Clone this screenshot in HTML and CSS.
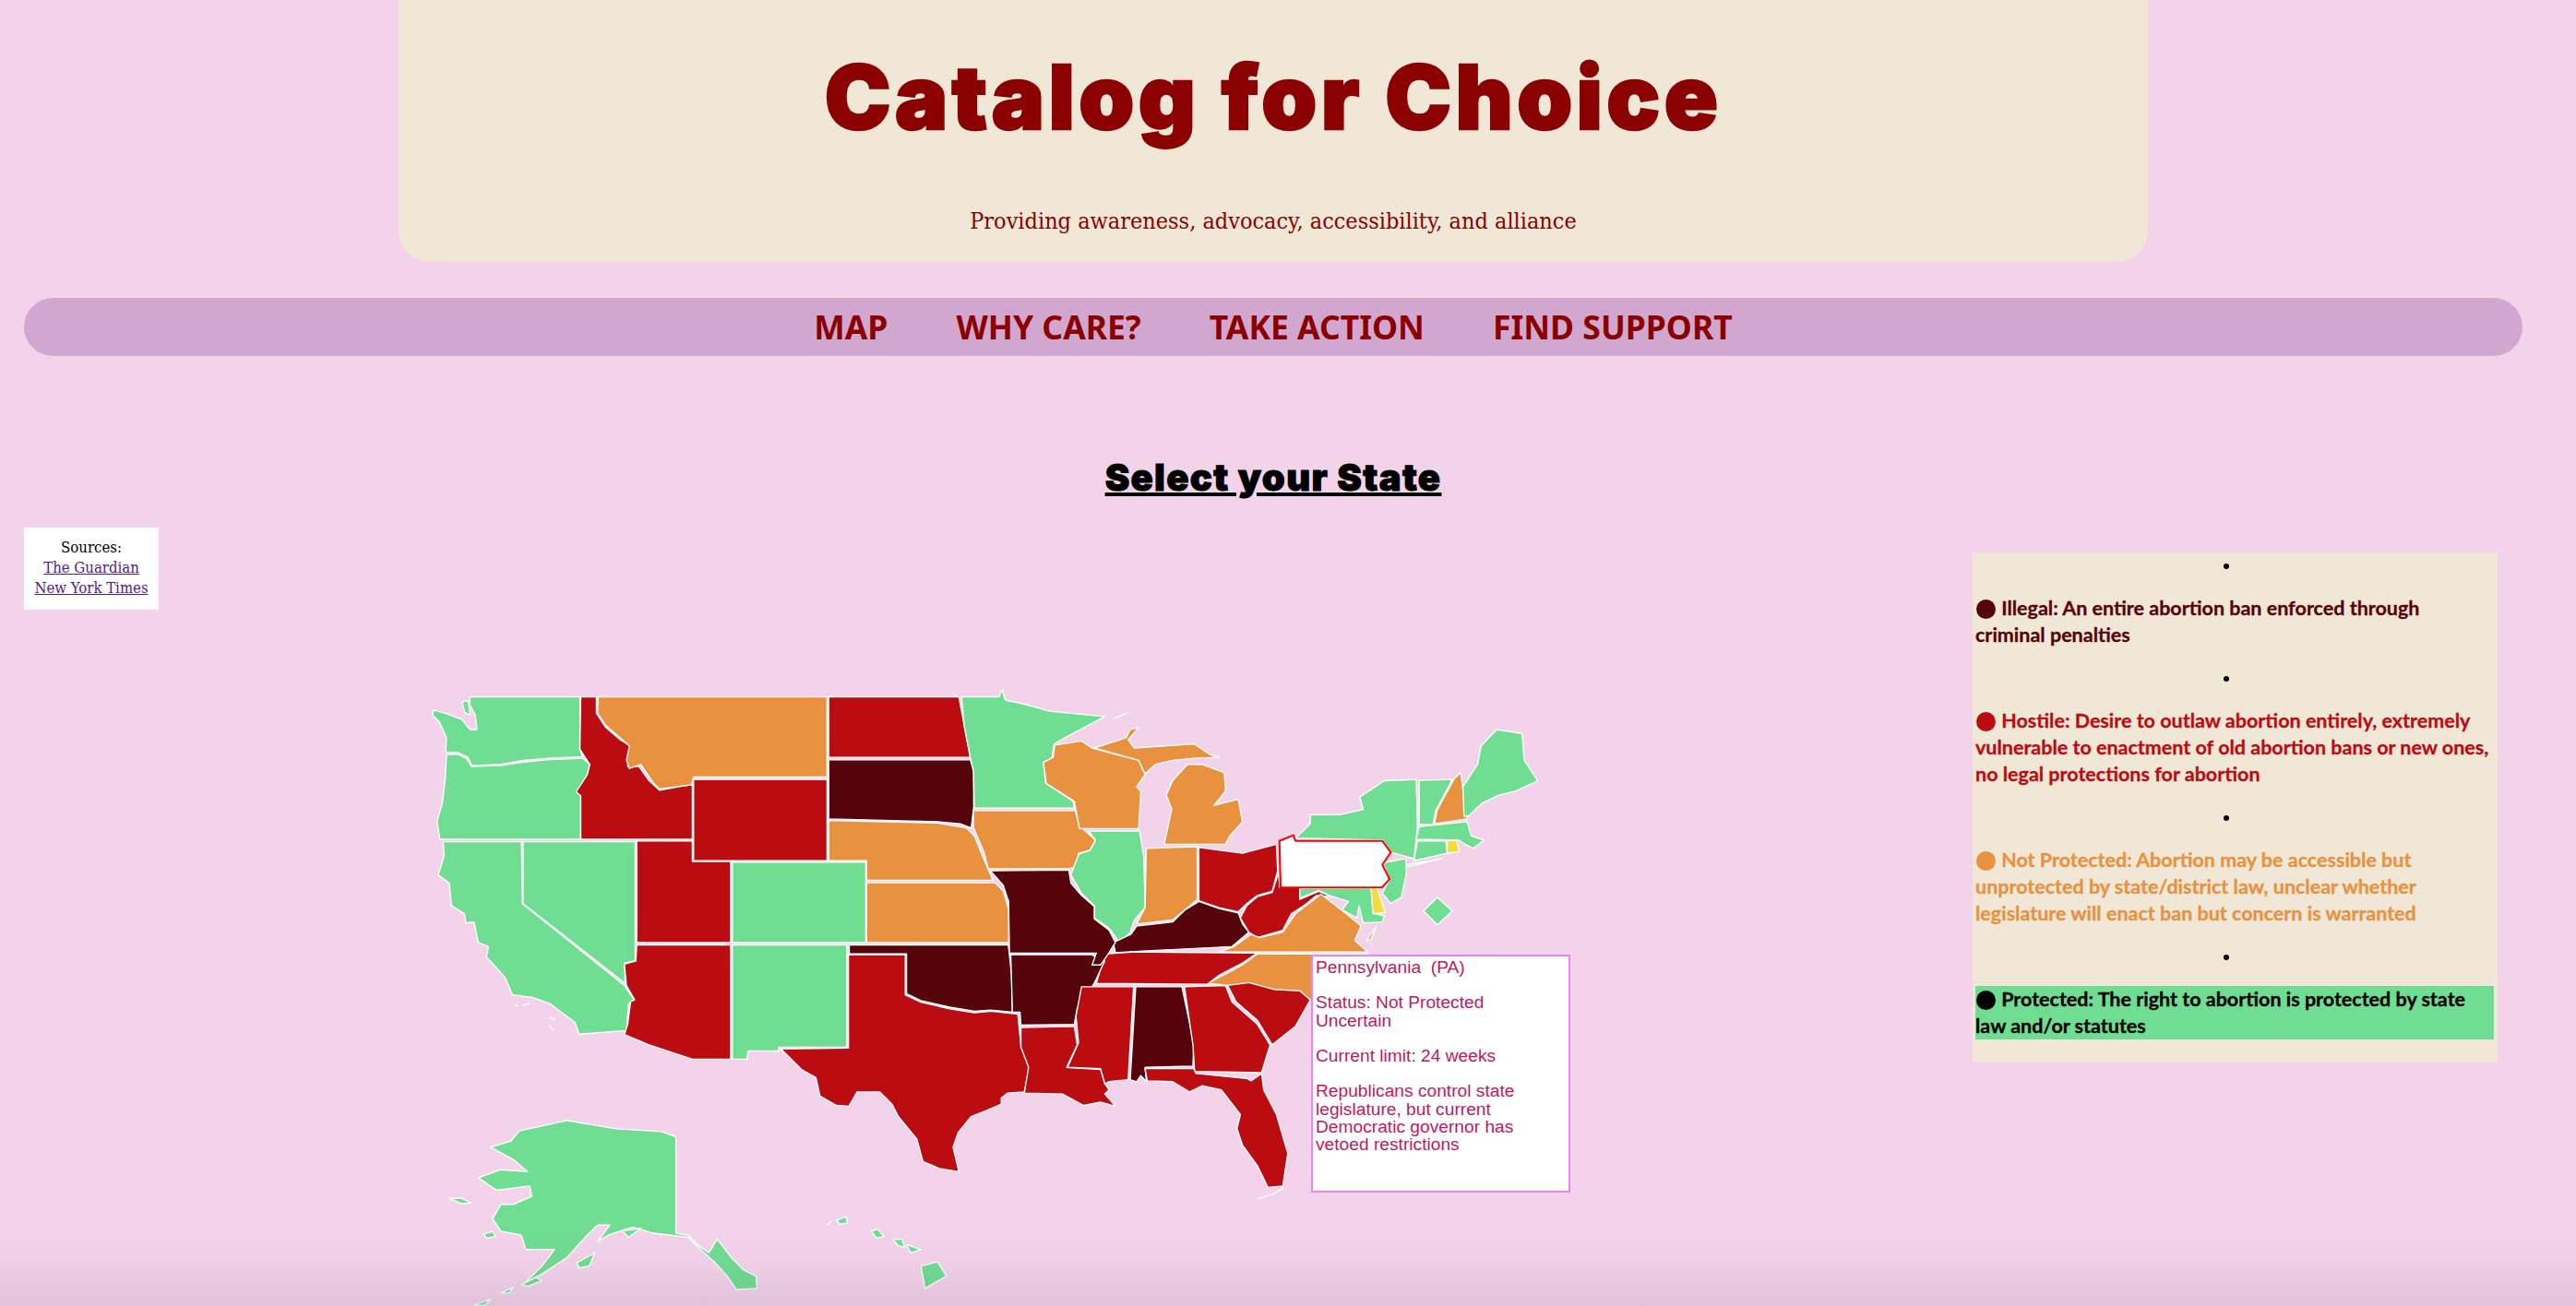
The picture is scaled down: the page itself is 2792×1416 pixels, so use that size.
FILE: index.html
```html
<!DOCTYPE html>
<html lang="en">
<head>
<meta charset="utf-8">
<title>Catalog for Choice</title>
<link rel="stylesheet" href="styles.css">
</head>
<body>
<div class="page">
  <header class="masthead">
    <h1 class="title">Catalog for Choice</h1>
    <p class="tagline">Providing awareness, advocacy, accessibility, and alliance</p>
  </header>
  <nav class="nav">
    <a class="nav-link" href="#">MAP</a>
    <a class="nav-link" href="#">WHY CARE?</a>
    <a class="nav-link" href="#">TAKE ACTION</a>
    <a class="nav-link" href="#">FIND SUPPORT</a>
  </nav>
  <h2 class="section-title">Select your State</h2>
  <main class="content">
    <aside class="sources">
      Sources:<br>
      <a href="#">The Guardian</a><br>
      <a href="#">New York Times</a>
    </aside>
    <section class="map">
      <svg class="map-svg" viewBox="400 720 1320 696" width="1320" height="696" role="img" aria-label="United States abortion status map">
        <g transform="translate(400 720) scale(.4464 .4439)">
          <path class="ok" d="M245 80L512 80L512 208L518 226L432 230L370 236L320 245L250 248L240 228L215 216L186 216L188 180L170 140L154 125L156 112L190 122L225 135L245 160L262 160L258 125L245 100Z"/>
          <path class="ok" d="M226 92L240 90L246 125L232 118Z"/>
          <path class="ok" d="M188 222L215 220L238 232L248 250L320 248L370 240L430 234L518 230L536 245L530 270L505 310L514 322L514 428L172 428L165 385L178 340L185 280Z"/>
          <path class="hostile" d="M514 80L552 80L552 120L575 155L610 185L634 200L628 250L655 250L680 285L705 308L760 298L785 295L785 428L514 428L514 322L503 312L530 270L536 245L512 208Z"/>
          <path class="unprotected" d="M556 80L1112 80L1112 276L788 276L783 295L705 305L690 290L660 245L632 255L625 235L632 200L610 180L575 150L555 120Z"/>
          <path class="hostile" d="M1116 80L1432 80L1445 150L1460 228L1116 228Z"/>
          <path class="illegal" d="M1116 234L1460 234L1468 262L1468 350L1462 400L1435 390L1380 385L1116 378Z"/>
          <path class="hostile" d="M788 282L1112 282L1112 480L788 480Z"/>
          <path class="unprotected" d="M1116 382L1380 388L1450 400L1470 420L1490 470L1515 528L1208 528L1208 480L1116 480Z"/>
          <path class="unprotected" d="M1208 534L1520 534L1540 555L1553 600L1553 680L1208 680Z"/>
          <path class="ok" d="M882 484L1206 484L1206 680L882 680Z"/>
          <path class="hostile" d="M650 432L785 432L785 482L878 482L878 680L650 680Z"/>
          <path class="ok" d="M374 434L646 434L646 725L620 730L622 780L374 585Z"/>
          <path class="ok" d="M180 434L370 434L372 585L620 785L645 822L630 830L625 895L510 904L500 875L440 830L400 815L348 808L330 765L285 715L290 690L265 680L255 630L235 632L232 610L200 590L195 535L168 515L182 470Z"/>
          <path class="hostile" d="M620 733L648 725L650 686L878 686L878 965L785 965L680 930L620 905L628 880L635 825L645 820L625 785Z"/>
          <path class="ok" d="M882 686L1160 686L1160 936L995 936L995 945L920 945L918 965L882 965Z"/>
          <path class="hostile" d="M1164 710L1302 710L1302 808L1340 826L1410 842L1470 852L1510 848L1575 855L1583 935L1603 985L1591 1045L1550 1048L1535 1060L1535 1075L1500 1090L1462 1105L1430 1145L1418 1180L1432 1240L1385 1232L1345 1215L1330 1160L1285 1105L1270 1075L1240 1045L1185 1045L1165 1080L1135 1078L1095 1055L1085 1010L1050 990L1000 940L1164 938Z"/>
          <path class="illegal" d="M1166 686L1552 686L1560 760L1562 850L1510 845L1470 848L1410 838L1340 822L1305 805L1305 708L1166 708Z"/>
          <path class="ok" d="M295 1180L345 1165L365 1140L480 1115L600 1135L710 1142L745 1155L745 1390L775 1395L800 1420L825 1438L845 1405L880 1450L910 1480L940 1495L942 1525L892 1528L870 1495L840 1462L800 1425L775 1400L690 1390L640 1375L580 1395L555 1410L585 1370L555 1370L525 1400L480 1450L420 1490L380 1510L420 1470L450 1430L380 1430L370 1395L320 1385L300 1355L320 1320L350 1320L395 1300L390 1275L310 1285L265 1255L320 1235L385 1240L350 1210Z"/>
          <path class="ok" d="M195 1305L225 1305L248 1316L225 1318Z"/>
          <path class="ok" d="M278 1392L300 1386L308 1398L285 1402Z"/>
          <path class="ok" d="M505 1462L548 1438L535 1470L510 1475Z"/>
          <path class="ok" d="M370 1516L405 1498L420 1506L385 1520Z"/>
          <path class="ok" d="M320 1536L350 1522L340 1536Z"/>
          <path class="ok" d="M255 1566L298 1550L280 1566Z"/>
          <path class="ok" d="M615 1385L660 1378L630 1400Z"/>
          <path class="ok" d="M1340 1470L1380 1460L1402 1495L1350 1525Z"/>
          <path class="ok" d="M1305 1418L1340 1430L1315 1438Z"/>
          <path class="ok" d="M1220 1385L1235 1380L1250 1398L1232 1402Z"/>
          <path class="ok" d="M1135 1358L1158 1350L1162 1365L1142 1368Z"/>
          <path class="ok" d="M1272 1405L1295 1405L1300 1425L1285 1420Z"/>
          <path class="coastline" d="M352 832L362 836M372 834L390 828M438 862L452 870M438 882L446 894M1112 1370L1124 1360"/>
        </g>
        <g transform="translate(1000 720) scale(.4592 .4439)">
          <path class="ok" d="M92 80L180 80L188 62L195 88L240 98L300 115L430 128L345 175L310 195L305 230L285 240L290 290L355 335L358 352L122 352L120 262L112 225L98 150Z"/>
          <path class="coastline" d="M450 134L486 118"/>
          <path class="unprotected" d="M120 358L360 358L370 395L408 430L395 455L368 462L365 495L345 500L155 500L145 460L120 400Z"/>
          <path class="unprotected" d="M312 198L375 188L400 205L510 235L525 270L505 300L515 310L510 402L370 402L358 335L292 292L285 240L308 228Z"/>
          <path class="unprotected" d="M405 205L480 180L490 160L510 155L485 185L500 205L570 200L640 195L680 222L700 228L640 230L590 235L550 245L525 268L510 235Z"/>
          <path class="unprotected" d="M570 440L588 355L575 320L590 285L625 245L660 245L712 265L715 310L688 345L745 330L755 385L725 420L715 440Z"/>
          <path class="ok" d="M392 408L512 408L522 470L525 595L500 625L490 655L465 680L440 645L405 620L405 590L375 560L350 515L368 465L395 455L408 430Z"/>
          <path class="unprotected" d="M528 450L648 446L648 575L620 600L590 625L505 635L525 595Z"/>
          <path class="hostile" d="M652 448L755 462L835 440L838 505L825 555L790 565L765 585L745 605L700 595L652 578Z"/>
          <path class="illegal" d="M450 680L492 660L505 640L590 630L620 600L652 580L700 597L745 608L755 635L770 655L730 690L500 702L455 705Z"/>
          <path class="hostile" d="M840 510L843 546L890 546L890 575L935 555L965 568L930 565L900 590L870 610L850 650L790 668L770 655L750 620L765 590L790 568L825 558Z"/>
          <path class="unprotected" d="M700 703L735 690L775 660L795 668L850 655L880 610L905 590L940 562L1000 610L1035 640L1020 675L1050 703Z"/>
          <path class="unprotected" d="M1048 675L1072 638L1058 672Z"/>
          <path class="unprotected" d="M672 780L700 765L755 735L790 708L1050 708L1040 780L917 825L830 795L770 780L720 785Z"/>
          <path class="hostile" d="M410 780L430 708L500 703L790 706L755 730L700 760L672 782Z"/>
          <path class="illegal" d="M208 710L400 710L420 725L430 725L405 780L365 840L358 880L232 882L230 850L212 850Z"/>
          <path class="illegal" d="M160 505L345 503L350 535L375 565L405 592L405 622L440 650L455 680L440 705L420 735L400 735L410 706L205 706L203 580L190 540Z"/>
          <path class="hostile" d="M232 888L358 885L365 930L340 985L420 990L430 1025L440 1040L430 1050L455 1080L420 1070L380 1078L330 1050L240 1048L250 985L232 935Z"/>
          <path class="hostile" d="M375 788L498 788L485 1015L440 1020L430 1025L420 988L342 985L368 925L362 860Z"/>
          <path class="illegal" d="M503 788L612 788L640 925L638 982L525 985L528 1020L515 1005L505 1020L490 1015Z"/>
          <path class="hostile" d="M618 788L715 785L730 825L790 880L820 930L800 998L642 995L638 930Z"/>
          <path class="hostile" d="M720 785L770 778L830 795L890 798L915 820L880 885L825 930L790 870L740 825Z"/>
          <path class="hostile" d="M525 988L640 988L645 1000L765 1012L775 1018L800 1000L805 1040L835 1100L862 1195L850 1275L815 1278L790 1225L755 1175L742 1135L750 1100L705 1040L660 1030L630 1045L590 1020L530 1018Z"/>
          <path class="coastline" d="M792 1306L830 1294L852 1278"/>
          <path class="ok" d="M880 425L1085 430L1105 460L1160 475L1168 395L1165 282L1090 285L1032 325L1040 355L985 368L915 368L915 390Z"/>
          <path class="ok" d="M1145 495L1225 475L1145 490Z"/>
          <path class="ok" d="M1172 284L1250 282L1210 360L1205 392L1172 392Z"/>
          <path class="unprotected" d="M1255 280L1270 265L1285 378L1208 390L1215 355Z"/>
          <path class="ok" d="M1278 372L1275 300L1310 245L1318 200L1355 160L1415 170L1420 235L1452 285L1400 310L1360 320L1320 340L1290 370Z"/>
          <path class="ok" d="M1172 397L1285 385L1295 420L1325 430L1300 450L1280 440L1265 430L1165 428Z"/>
          <path class="ok" d="M1168 432L1235 432L1238 462L1160 480Z"/>
          <path class="permissive" d="M1238 432L1260 430L1267 458L1238 462Z"/>
          <path class="ok" d="M1090 485L1140 475L1142 510L1130 570L1105 585L1085 560L1102 525L1088 490Z"/>
          <path class="ok" d="M890 548L1060 546L1070 610L1090 615L1085 630L1040 632L1030 590L1025 620L990 600L1005 580L960 565L935 553L890 572Z"/>
          <path class="permissive" d="M1058 545L1072 545L1092 607L1063 610Z"/>
          <path class="ok" d="M1215 570L1250 603L1215 637L1182 603Z"/>
          <path class="selected" d="M842 432L875 418L880 432L1085 432L1105 460L1085 490L1102 525L1085 545L845 546Z"/>
        </g>
      </svg>
      <div class="tooltip">
        <p class="tooltip-block">Pennsylvania &nbsp;(PA)</p>
        <p class="tooltip-block">Status: Not Protected<br>Uncertain</p>
        <p class="tooltip-block">Current limit: 24 weeks</p>
        <p class="tooltip-block">Republicans control state legislature, but current Democratic governor has vetoed restrictions</p>
      </div>
    </section>
    <aside class="legend">
      <span class="bullet"></span>
      <p class="legend-text text-illegal"><span class="swatch swatch-illegal"></span> Illegal: An entire abortion ban enforced through criminal penalties</p>
      <span class="bullet"></span>
      <p class="legend-text text-hostile"><span class="swatch swatch-hostile"></span> Hostile: Desire to outlaw abortion entirely, extremely vulnerable to enactment of old abortion bans or new ones, no legal protections for abortion</p>
      <span class="bullet"></span>
      <p class="legend-text text-unprotected"><span class="swatch swatch-unprotected"></span> Not Protected: Abortion may be accessible but unprotected by state/district law, unclear whether legislature will enact ban but concern is warranted</p>
      <span class="bullet"></span>
      <p class="legend-text text-protected"><span class="swatch swatch-protected"></span> Protected: The right to abortion is protected by state law and/or statutes</p>
    </aside>
  </main>
  <div class="bottom-shade"></div>
</div>
</body>
</html>
```
FILE: styles.css
```css
* { box-sizing: border-box; }
html, body { margin: 0; padding: 0; }
body { background: #f3d3ea; overflow: hidden; }
.page { position: relative; width: 2792px; height: 1416px; overflow: hidden; }

.masthead {
  width: 1896px;
  height: 284px;
  margin-left: 432px;
  background: #f1e7d7;
  border-radius: 0 0 34px 34px;
  display: flex;
  flex-direction: column;
  align-items: center;
}
.title {
  margin: 50px 0 0;
  font-family: Inter, "Liberation Sans", sans-serif;
  font-weight: 900;
  font-size: 96px;
  line-height: 110px;
  letter-spacing: 4.4px;
  -webkit-text-stroke: 2.5px #8b0000;
  color: #8b0000;
  white-space: nowrap;
}
.tagline {
  margin: 65px 0 0;
  font-family: "DejaVu Serif Condensed", "DejaVu Serif", serif;
  font-size: 25px;
  line-height: 30px;
  color: #8b0000;
}

.nav {
  width: 2708px;
  height: 63px;
  margin: 39px 0 0 26px;
  background: #d1a7cf;
  border-radius: 32px;
  display: flex;
  justify-content: center;
  align-items: center;
  gap: 74px;
}
.nav-link {
  margin-top: -2px;
  font-family: "Noto Sans", "Open Sans", sans-serif;
  font-weight: 700;
  font-size: 35.5px;
  line-height: 48px;
  color: #8b0000;
  text-decoration: none;
}

.section-title {
  width: 2760px;
  margin: 108px 0 0;
  font-family: Inter, "Liberation Sans", sans-serif;
  font-weight: 900;
  font-size: 40px;
  line-height: 48px;
  letter-spacing: 1.3px;
  -webkit-text-stroke: 1px #000;
  text-align: center;
  text-decoration: underline;
  color: #000;
}

.content {
  display: flex;
  align-items: flex-start;
  margin-top: 30px;
  padding-left: 26px;
}
.sources {
  flex: none;
  width: 146px;
  height: 89px;
  padding: 11px 0;
  background: #fff;
  font-family: "DejaVu Serif Condensed", "DejaVu Serif", serif;
  font-size: 16.6px;
  line-height: 22px;
  text-align: center;
  color: #000;
}
.sources a { color: #551a8b; }

.map {
  flex: none;
  position: relative;
  width: 1320px;
  height: 696px;
  margin: 148px 0 0 228px;
}
.map-svg { display: block; }
.map-svg path { stroke: #fff; stroke-width: 3; stroke-linejoin: round; }
.ok { fill: #6fdd92; }
.unprotected { fill: #e8923f; }
.hostile { fill: #bb0c11; }
.illegal { fill: #56040b; }
.permissive { fill: #f5dc3e; }
.coastline { fill: none; }
.map-svg .selected { fill: #fff; stroke: #f00; stroke-width: 4.5; }

.tooltip {
  position: absolute;
  left: 1021px;
  top: 315px;
  width: 281px;
  height: 258px;
  padding: 2px 2px 0 3px;
  background: #fff;
  border: 2px solid #ee82ee;
  font-family: "Liberation Sans", Arial, sans-serif;
  font-size: 19.2px;
  line-height: 19.2px;
  color: #c2185b;
}
.tooltip-block { margin: 0 0 19.2px; }

.legend {
  flex: none;
  width: 569px;
  height: 553px;
  margin: 27px 0 0 418px;
  padding: 0 4px 0 3px;
  background: #f1e7d7;
  display: flex;
  flex-direction: column;
  align-items: flex-start;
}
.bullet {
  display: block;
  width: 6px;
  height: 6px;
  margin: 12px 0 12px 269px;
  border-radius: 50%;
  background: #000;
  flex: none;
}
.legend-text {
  margin: 16px 0 18px;
  font-family: Lato, "Noto Sans", sans-serif;
  font-weight: 700;
  font-size: 21.5px;
  line-height: 29px;
  -webkit-text-stroke: .3px currentColor;
}
.swatch {
  display: inline-block;
  width: 21px;
  height: 21px;
  border-radius: 50%;
  vertical-align: -4px;
  margin-left: 1px;
  margin-right: 1px;
}
.text-illegal { color: #56040b; }
.text-hostile { color: #bb0c11; }
.text-unprotected { color: #e8923f; }
.text-protected { color: #000; background: #6fdd92; width: 100%; }
.swatch-illegal { background: #56040b; }
.swatch-hostile { background: #bb0c11; }
.swatch-unprotected { background: #e8923f; }
.swatch-protected { background: #000; }

.bottom-shade {
  position: absolute;
  left: 0;
  right: 0;
  bottom: 0;
  height: 84px;
  background: linear-gradient(to bottom, rgba(120, 110, 120, 0), rgba(120, 110, 120, .05) 50%, rgba(120, 110, 120, .16));
  pointer-events: none;
}
```
